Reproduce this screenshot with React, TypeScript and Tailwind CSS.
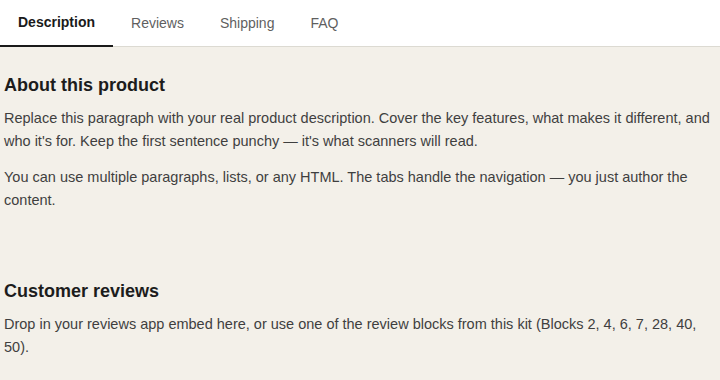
const tabs = ["Description", "Reviews", "Shipping", "FAQ"];

export default function App() {
  return (
    <div className="h-[380px] w-[720px] overflow-hidden bg-[#f3f0e9] font-['Liberation_Sans',Arial,sans-serif]">
      <nav className="flex h-[47px] border-b border-[#dcdad2] bg-white">
        {tabs.map((t, i) => (
          <button
            key={t}
            className={
              i === 0
                ? "-mb-px flex items-center border-b-2 border-[#1a1a1a] px-[18px] text-[14px] font-bold text-[#1a1a1a]"
                : "flex items-center px-[18px] text-[14px] text-[#5f5f5f]"
            }
          >
            {t}
          </button>
        ))}
      </nav>

      <section className="px-1 pt-[26px]">
        <h2 className="text-[18px] leading-6 font-bold text-[#1c1c1c]">About this product</h2>
        <p className="mt-[10px] text-[14.5px] leading-[23px] text-[#3f3f3f]">
          Replace this paragraph with your real product description. Cover the key features, what makes it different, and
          who it's for. Keep the first sentence punchy — it's what scanners will read.
        </p>
        <p className="mt-[13px] text-[14.5px] leading-[23px] text-[#3f3f3f]">
          You can use multiple paragraphs, lists, or any HTML. The tabs handle the navigation — you just author the
          content.
        </p>
      </section>

      <section className="mt-[67px] px-1">
        <h2 className="text-[18px] leading-6 font-bold text-[#1c1c1c]">Customer reviews</h2>
        <p className="mt-[10px] text-[14.5px] leading-[23px] text-[#3f3f3f]">
          Drop in your reviews app embed here, or use one of the review blocks from this kit (Blocks 2, 4, 6, 7, 28, 40,
          50).
        </p>
      </section>
    </div>
  );
}
